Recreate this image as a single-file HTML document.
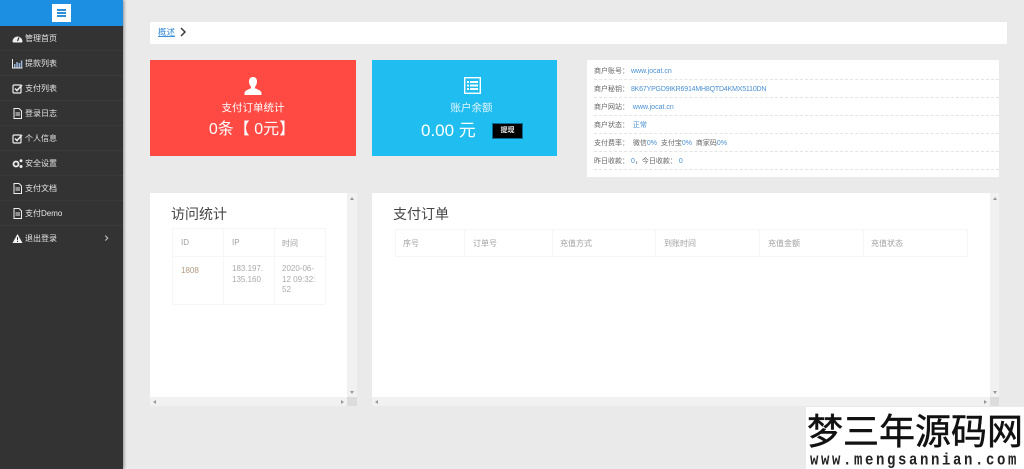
<!DOCTYPE html>
<html><head><meta charset="utf-8"><style>
*{box-sizing:border-box;margin:0;padding:0}
html,body{width:1024px;height:469px;overflow:hidden;background:#eaeaea;font-family:"Liberation Sans","Noto Sans CJK SC",sans-serif}
#w{position:absolute;left:0;top:0;width:1024px;height:469px;filter:blur(.3px)}
.a{position:absolute}
.side{left:0;top:0;width:123px;height:469px;background:#333;box-shadow:1px 0 3px rgba(0,0,0,.4)}
.head{left:0;top:0;width:123px;height:26px;background:#1c8fe3}
.burger{left:52px;top:4px;width:19px;height:18px;background:#fff}
.burger i{position:absolute;left:5px;width:9px;height:2px;background:#2d8fd8}
.mi{position:absolute;left:0;width:123px;height:25px;border-bottom:1px solid #3a3a3a;color:#e6e6e6;font-size:8px;line-height:25px;padding-left:25px;white-space:nowrap}
.mi svg{position:absolute;left:12px;top:7px;width:11px;height:11px}
.bc{left:150px;top:22px;width:857px;height:22px;background:#fff}
.card{top:60px;height:96px;color:#fff;text-align:center}
.info{left:587px;top:60px;width:412px;height:117px;background:#fff;font-size:7px;color:#666}
.info div{position:absolute;left:7px;width:405px;height:18px;line-height:19px;border-bottom:1px dashed #e4e4e4;white-space:nowrap}
.info b{font-weight:400;color:#4a90d0}
.panel{top:193px;height:213px;background:#fff}
.sb{background:#f1f1f1}
.t{position:absolute;font-size:8px;color:#a0a0a0;white-space:nowrap}
.line{position:absolute;background:#f6f6f6}
.tri{position:absolute;width:0;height:0}
</style></head><body><div id="w">
<div class="a side">
<div class="a head"></div>
<div class="a burger"><i style="top:5px"></i><i style="top:8px"></i><i style="top:11px"></i></div>
<div class="mi" style="top:26px"><svg viewBox="0 0 11 11"><path d="M.5 8.500a5 5 0 0 1 10 0q0 1-1 1h-8q-1 0-1-1z" fill="#eee"/><path d="M5.500 8 7 4.500" stroke="#333" stroke-width="1.200"/></svg>管理首页</div>
<div class="mi" style="top:51px"><svg viewBox="0 0 11 11"><path d="M.5 1v9h10" stroke="#eee" fill="none"/><path d="M2 6h1.500v3.500H2zM4.300 4h1.500v5.500H4.300zM6.600 5h1.500v4.500H6.600zM8.800 2.500h1.500v7H8.800z" fill="#9db8e0"/></svg>提款列表</div>
<div class="mi" style="top:76px"><svg viewBox="0 0 11 11"><rect x="1" y="2" width="8" height="8" rx="1" fill="none" stroke="#eee" stroke-width="1.200"/><path d="M3 5.500l2 2L10 2" fill="none" stroke="#eee" stroke-width="1.500"/></svg>支付列表</div>
<div class="mi" style="top:101px"><svg viewBox="0 0 11 11"><path d="M2 .5h5l2.500 2.500v7.500H2z" fill="none" stroke="#eee"/><path d="M3.500 5h4.500M3.500 7h4.500" stroke="#eee"/></svg>登录日志</div>
<div class="mi" style="top:126px"><svg viewBox="0 0 11 11"><rect x="1" y="2" width="8" height="8" rx="1" fill="none" stroke="#eee" stroke-width="1.200"/><path d="M3 5.500l2 2L10 2" fill="none" stroke="#eee" stroke-width="1.500"/></svg>个人信息</div>
<div class="mi" style="top:151px"><svg viewBox="0 0 11 11"><circle cx="4" cy="6" r="2.500" fill="none" stroke="#eee" stroke-width="1.800"/><circle cx="9" cy="2.800" r="1.500" fill="#eee"/><circle cx="9" cy="8.500" r="1.500" fill="#eee"/></svg>安全设置</div>
<div class="mi" style="top:176px"><svg viewBox="0 0 11 11"><path d="M2 .5h5l2.500 2.500v7.500H2z" fill="none" stroke="#eee"/><path d="M3.500 5h4.500M3.500 7h4.500" stroke="#eee"/></svg>支付文档</div>
<div class="mi" style="top:201px"><svg viewBox="0 0 11 11"><path d="M2 .5h5l2.500 2.500v7.500H2z" fill="none" stroke="#eee"/><path d="M3.500 5h4.500M3.500 7h4.500" stroke="#eee"/></svg>支付Demo</div>
<div class="mi" style="top:226px;border:0"><svg viewBox="0 0 11 11"><path d="M5.500 1 10.500 10h-10z" fill="#f2f2f2"/><path d="M5.500 4v3.300M5.500 8v1" stroke="#333"/></svg>退出登录<svg viewBox="0 0 11 11" style="left:102px;width:9px;height:9px;top:8px"><path d="M4 2l3 3-3 3" fill="none" stroke="#ccc" stroke-width="1.200"/></svg></div>
</div>

<div class="a bc"></div>
<div class="a" style="left:158px;top:26px;font-size:8.500px;line-height:13px;color:#3f8fd8;text-decoration:underline">概述</div>
<svg class="a" style="left:179px;top:27px" width="8" height="10" viewBox="0 0 8 10"><path d="M2 1l4 4-4 4" fill="none" stroke="#333" stroke-width="1.400"/></svg>

<div class="a card" style="left:150px;width:206px;background:#ff4a44">
<svg class="a" style="left:94px;top:17px" width="18" height="18" viewBox="0 0 18 18"><path d="M9 0c3 0 4 2.300 4 4.500 0 2.500-1 4.200-2 5.200v1.500c2 1 6 2 6.500 4.500V18H.5v-2.300C1 13.200 5 12.200 7 11.200V9.700c-1-1-2-2.700-2-5.200C5 2.300 6 0 9 0z" fill="#fff"/></svg>
<div class="a" style="left:0;width:206px;top:40px;font-size:10.500px;line-height:16px">支付订单统计</div>
<div class="a" style="left:-1px;width:206px;top:59px;font-size:16px;line-height:22px;white-space:nowrap">0条【 0元】</div>
</div>

<div class="a card" style="left:372px;width:185px;background:#20bdf0">
<svg class="a" style="left:92px;top:17px" width="17" height="17" viewBox="0 0 17 17"><rect x=".7" y=".7" width="15.600" height="15.600" fill="none" stroke="#fff" stroke-width="1.400"/><path d="M3 4h2v2H3zM6 4h8v2H6zM3 7.500h2v2H3zM6 7.500h8v2H6zM3 11h2v2H3zM6 11h8v2H6z" fill="#fff"/></svg>
<div class="a" style="left:0;width:199px;top:40px;font-size:10.500px;line-height:16px;color:#e4f6fd">账户余额</div>
<div class="a" style="left:49px;top:60px;font-size:17px;line-height:22px;white-space:nowrap">0.00 元</div>
<div class="a" style="left:120px;top:63px;width:31px;height:16px;background:#000;border:1px solid #0a6d96;font-size:7px;line-height:14px;font-weight:bold;color:#eee">提现</div>
</div>

<div class="a info">
<div style="top:2px">商户账号： <b>www.jocat.cn</b></div>
<div style="top:20px">商户秘钥： <b style="letter-spacing:-.18px">8K67YPGD9IKR6914MH8QTD4KMX5110DN</b></div>
<div style="top:38px">商户网站： &nbsp;<b>www.jocat.cn</b></div>
<div style="top:56px">商户状态： &nbsp;<b>正常</b></div>
<div style="top:74px">支付费率： &nbsp;微信<b>0%</b> &nbsp;支付宝<b>0%</b> &nbsp;商家码<b>0%</b></div>
<div style="top:92px">昨日收款： <b>0</b>，今日收款： <b>0</b></div>
</div>

<div class="a panel" style="left:150px;width:207px">
<div class="a" style="left:21px;top:12px;font-size:14px;line-height:18px;color:#444">访问统计</div>
<div class="line" style="left:22px;top:35px;width:153px;height:1px"></div>
<div class="line" style="left:22px;top:63px;width:153px;height:1px"></div>
<div class="line" style="left:22px;top:111px;width:153px;height:1px"></div>
<div class="line" style="left:22px;top:35px;width:1px;height:77px"></div>
<div class="line" style="left:73px;top:35px;width:1px;height:77px"></div>
<div class="line" style="left:124px;top:35px;width:1px;height:77px"></div>
<div class="line" style="left:175px;top:35px;width:1px;height:77px"></div>
<div class="t" style="left:31px;top:45px">ID</div>
<div class="t" style="left:82px;top:45px">IP</div>
<div class="t" style="left:132px;top:45px">时间</div>
<div class="t" style="left:31px;top:73px;color:#b09a80;font-size:8px">1808</div>
<div class="t" style="left:82px;top:71px;font-size:8px;line-height:10.500px;color:#aaa">183.197.<br>135.160</div>
<div class="t" style="left:132px;top:71px;font-size:8px;line-height:10.500px;color:#aaa">2020-06-<br>12 09:32:<br>52</div>
<div class="a sb" style="left:197px;top:0;width:10px;height:213px"></div>
<div class="a sb" style="left:0;top:204px;width:207px;height:9px"></div>
<div class="a" style="left:197px;top:204px;width:10px;height:9px;background:#dcdcdc"></div>
<div class="tri" style="left:200px;top:4px;border:2px solid transparent;border-bottom:3px solid #999;border-top:0"></div>
<div class="tri" style="left:200px;top:198px;border:2px solid transparent;border-top:3px solid #999;border-bottom:0"></div>
<div class="tri" style="left:3px;top:207px;border:2px solid transparent;border-right:3px solid #999;border-left:0"></div>
<div class="tri" style="left:191px;top:207px;border:2px solid transparent;border-left:3px solid #999;border-right:0"></div>
</div>

<div class="a panel" style="left:372px;width:627px">
<div class="a" style="left:21px;top:12px;font-size:14px;line-height:18px;color:#444">支付订单</div>
<div class="line" style="left:23px;top:36px;width:573px;height:1px"></div>
<div class="line" style="left:23px;top:63px;width:573px;height:1px"></div>
<div class="line" style="left:23px;top:36px;width:1px;height:28px"></div>
<div class="line" style="left:92px;top:36px;width:1px;height:28px"></div>
<div class="line" style="left:180px;top:36px;width:1px;height:28px"></div>
<div class="line" style="left:283px;top:36px;width:1px;height:28px"></div>
<div class="line" style="left:387px;top:36px;width:1px;height:28px"></div>
<div class="line" style="left:491px;top:36px;width:1px;height:28px"></div>
<div class="line" style="left:595px;top:36px;width:1px;height:28px"></div>
<div class="t" style="left:31px;top:45px">序号</div>
<div class="t" style="left:101px;top:45px">订单号</div>
<div class="t" style="left:188px;top:45px">充值方式</div>
<div class="t" style="left:292px;top:45px">到账时间</div>
<div class="t" style="left:396px;top:45px">充值金额</div>
<div class="t" style="left:499px;top:45px">充值状态</div>
<div class="a sb" style="left:618px;top:0;width:9px;height:213px"></div>
<div class="a sb" style="left:0;top:204px;width:627px;height:9px"></div>
<div class="a" style="left:618px;top:204px;width:9px;height:9px;background:#dcdcdc"></div>
<div class="tri" style="left:621px;top:4px;border:2px solid transparent;border-bottom:3px solid #999;border-top:0"></div>
<div class="tri" style="left:621px;top:198px;border:2px solid transparent;border-top:3px solid #999;border-bottom:0"></div>
<div class="tri" style="left:3px;top:207px;border:2px solid transparent;border-right:3px solid #999;border-left:0"></div>
<div class="tri" style="left:612px;top:207px;border:2px solid transparent;border-left:3px solid #999;border-right:0"></div>
</div>

<div class="a" style="left:806px;top:407px;width:218px;height:62px;background:#fff;overflow:hidden">
<div class="a" style="left:1px;top:1px;font-size:36px;line-height:42px;color:#111;white-space:nowrap;font-family:'Noto Sans CJK SC',sans-serif;-webkit-text-stroke:.5px #111">梦三年源码网</div>
<div class="a" style="left:4px;top:46px;font-family:'Liberation Mono',monospace;font-weight:bold;font-size:14px;line-height:16px;color:#222;white-space:nowrap;letter-spacing:2.600px;transform:scaleY(1.200);transform-origin:0 50%">www.mengsannian.com</div>
</div>
</div></body></html>
